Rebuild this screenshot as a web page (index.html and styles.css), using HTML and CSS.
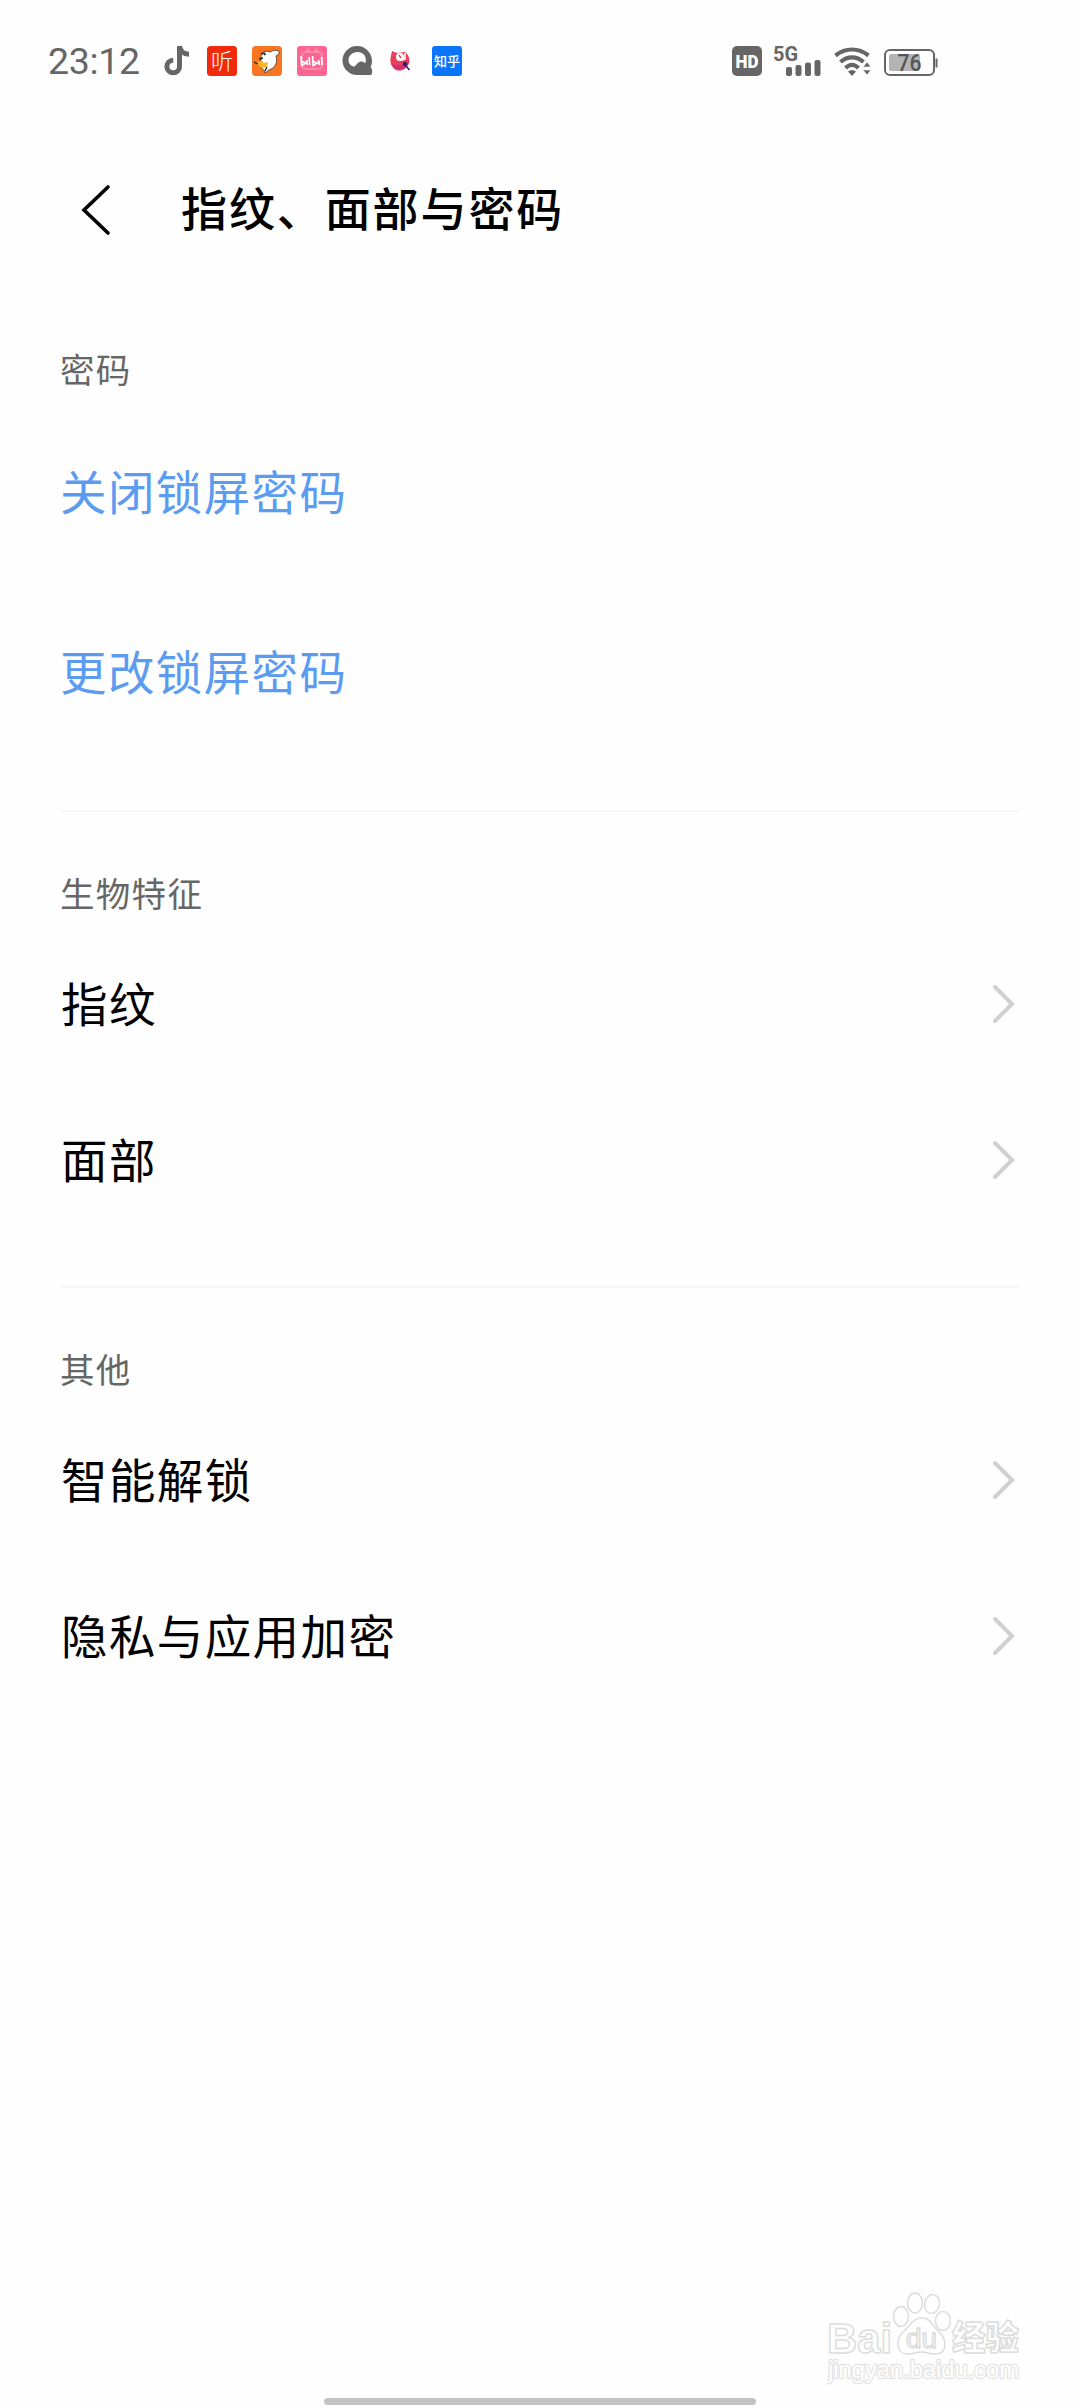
FILE: index.html
```html
<!DOCTYPE html>
<html lang="zh-CN">
<head>
    <meta charset="UTF-8">
    <meta name="viewport" content="width=device-width, initial-scale=1.0">
    <title>指纹、面部与密码</title>
    <link rel="stylesheet" href="styles.css">
</head>
<body>
    <div class="screen">
        <div class="status-bar">
            <div class="clock">23:12</div>
            <div class="app-icons">
                <svg width="30" height="30" viewBox="0 0 30 30">
                    <path d="M17.500 0v20.500a6.300 6.300 0 1 1-6.300-6.300M17.500 0c.6 5 4 8 9.500 8.300" fill="none" stroke="#666" stroke-width="5"/>
                </svg>
                <svg width="30" height="30" viewBox="0 0 30 30">
                    <rect width="30" height="30" rx="3.500" fill="#f22a0c"/>
                    <text class="ting" x="4" y="22.500" textLength="22" lengthAdjust="spacingAndGlyphs">听</text>
                </svg>
                <svg width="30" height="30" viewBox="0 0 30 30">
                    <rect width="30" height="30" rx="4" fill="#fa7521"/>
                    <path d="M9 11C9 6 13 4 18 6c3-2 6-2 9-1 1 2-1 4-3 5 2 7-1 12-7 14l-4 3c0-3-3-4-4-6z" fill="#fff" stroke="#433" stroke-width=".8"/>
                    <path d="M5 16l5-1 2 2 4-1-1 5-5 1-4-3z" fill="#fbb52c"/>
                    <path d="M2 16l4 2M9 8l4-1M12 9l2-1M7 13l4-1M13 25l2-4" fill="none" stroke="#222" stroke-width="1.300"/>
                </svg>
                <svg width="30" height="30" viewBox="0 0 30 30">
                    <rect width="30" height="30" rx="3" fill="#fb6592"/>
                    <path d="M10 3l3 3M20 3l-3 3" stroke="#fd94b3" stroke-width="2"/>
                    <rect x="5" y="6" width="20" height="17" rx="4" fill="none" stroke="#fd87aa" stroke-width="2"/>
                    <path d="M4 10l.7 9.500 4-2.500-3.700-1.500M9.500 14l1 5M12 11l.8 8M15.500 10l.7 9.500 4-2.500-3.700-1.500M21.500 14l1 5M24.500 11l.8 8" fill="none" stroke="#fff" stroke-width="1.700"/>
                </svg>
                <svg width="30" height="30" viewBox="0 0 30 30">
                    <path fill-rule="evenodd" d="M15 0a15 15 0 0 1 15 15c0 2.500-.5 4-1.500 6 2 2 2.500 6 .5 8H15A14.500 14.500 0 0 1 15 0zM15.500 6C10 6 6.500 10 6.500 14c0 4 3 6.500 6 6.500 3-3 4-5 7.500-5l3.500 1.500C25 11 22 6 15.500 6z" fill="#666"/>
                </svg>
                <svg width="30" height="30" viewBox="0 0 30 30">
                    <path d="M5 5l5 2 8-1c5 4 6 10 2 15-5 5-12 5-15-1-3-5-1-10 0-15z" fill="#e8405a"/>
                    <path d="M4 17c3 4 12 3 18-2-1 9-14 13-18 2z" fill="#d02f78"/>
                    <circle cx="13" cy="11" r="4" fill="#fff"/>
                    <path d="M18 7v6l-3 1" fill="none" stroke="#fff" stroke-width="1.500"/>
                    <path d="M12 9l2 3" stroke="#e8405a" stroke-width="1.500"/>
                    <circle cx="18" cy="18" r="2.200" fill="#33206b"/>
                    <path d="M19 20l3.500 4" stroke="#33206b" stroke-width="1.500"/>
                </svg>
                <svg width="30" height="30" viewBox="0 0 30 30">
                    <rect width="30" height="30" rx="3" fill="#0a74fa"/>
                    <text class="zhihu" x="2" y="19.500" textLength="26">知乎</text>
                </svg>
            </div>
            <div class="system-icons">
                <svg width="30" height="30" viewBox="0 0 30 30">
                    <rect width="30" height="30" rx="5" fill="#666"/>
                    <text class="hd" x="3.500" y="21.500" textLength="23" lengthAdjust="spacingAndGlyphs">HD</text>
                </svg>
                <svg width="48" height="30" viewBox="0 0 48 30">
                    <text class="network" x="-1" y="14.500" textLength="25" lengthAdjust="spacingAndGlyphs">5G</text>
                    <rect x="12" y="21" width="6" height="9" rx="2" fill="#666"/>
                    <rect x="21.500" y="19" width="6" height="11" rx="2" fill="#666"/>
                    <rect x="31" y="16.500" width="6" height="13.500" rx="2" fill="#666"/>
                    <rect x="40.500" y="14" width="6" height="16" rx="2" fill="#666"/>
                </svg>
                <svg width="38" height="30" viewBox="0 0 38 30">
                    <path d="M1.500 9.500c10-8 23-8 33 0M6.500 16c7-6.300 16-6.300 23 0M11.500 22c4.500-4.300 8.500-4.300 13 0" fill="none" stroke="#666" stroke-width="4.200"/>
                    <path d="M14 25.500c2.500-2 5.500-2 8 0l-4 4.500z" fill="#666"/>
                    <path d="M29 21l4-5 4 5zM29 24l4 5 4-5z" fill="#666" stroke="#fefefe" stroke-width=".6"/>
                </svg>
                <svg width="54" height="30" viewBox="0 0 54 30">
                    <rect x="1" y="4" width="49" height="25" rx="5" fill="none" stroke="#666" stroke-width="2"/>
                    <rect x="5" y="8" width="31" height="17" rx="2" fill="#b4b4b4"/>
                    <path d="M52.500 12.500v9" stroke="#666" stroke-width="2"/>
                    <text class="battery-level" x="13.500" y="24.500" textLength="24" lengthAdjust="spacingAndGlyphs">76</text>
                </svg>
            </div>
        </div>

        <div class="header">
            <svg class="back" width="32" height="52" viewBox="0 0 32 52">
                <path d="M28 3L4 26l24 23" fill="none" stroke="#000" stroke-width="3.600" stroke-linecap="round"/>
            </svg>
            <h1>指纹、面部与密码</h1>
        </div>

        <div class="section password">
            <div class="label">密码</div>
            <div class="row link">关闭锁屏密码</div>
            <div class="row link">更改锁屏密码</div>
        </div>

        <div class="section">
            <div class="label">生物特征</div>
            <div class="row">
                <span>指纹</span>
                <svg class="arrow" width="24" height="40" viewBox="0 0 24 40"><path d="M3 3l17 17L3 37"/></svg>
            </div>
            <div class="row">
                <span>面部</span>
                <svg class="arrow" width="24" height="40" viewBox="0 0 24 40"><path d="M3 3l17 17L3 37"/></svg>
            </div>
        </div>

        <div class="section others">
            <div class="label">其他</div>
            <div class="row">
                <span>智能解锁</span>
                <svg class="arrow" width="24" height="40" viewBox="0 0 24 40"><path d="M3 3l17 17L3 37"/></svg>
            </div>
            <div class="row">
                <span>隐私与应用加密</span>
                <svg class="arrow" width="24" height="40" viewBox="0 0 24 40"><path d="M3 3l17 17L3 37"/></svg>
            </div>
        </div>

        <div class="home-bar"></div>

        <svg class="watermark" width="200" height="100" viewBox="0 0 200 100">
            <text class="brand" x="0" y="65" textLength="65" lengthAdjust="spacingAndGlyphs">Bai</text>
            <ellipse cx="74" cy="28.500" rx="7.500" ry="10"/>
            <ellipse cx="88" cy="15" rx="7.500" ry="10"/>
            <ellipse cx="105" cy="16" rx="7.500" ry="9.500" transform="rotate(12 105 16)"/>
            <ellipse cx="116" cy="33" rx="7.500" ry="9.500"/>
            <path d="M95 30c9 0 10 8 17 14 8 7 9 22-4 22-6 0-8-2-13-2s-9 2-14 2c-12 0-13-14-5-22 7-6 10-14 19-14z"/>
            <text class="du" x="79" y="60" textLength="31" lengthAdjust="spacingAndGlyphs">du</text>
            <text class="jingyan" x="125" y="62" textLength="67" lengthAdjust="spacingAndGlyphs">经验</text>
            <text class="site" x="1" y="90" textLength="191" lengthAdjust="spacingAndGlyphs">jingyan.baidu.com</text>
        </svg>
    </div>
</body>
</html>
```

FILE: styles.css
```css
body {
    margin: 0;
    background: #fefefe;
    font-family: Roboto, "Noto Sans CJK SC", sans-serif;
    color: #000;
}

.screen {
    position: relative;
    display: flex;
    flex-direction: column;
    width: 1080px;
    height: 2408px;
    overflow: hidden;
}

/* Status bar */
.status-bar {
    display: flex;
    align-items: center;
    box-sizing: border-box;
    height: 122px;
    padding: 0 142px 0 48px;
}

.status-bar svg {
    display: block;
    overflow: visible;
}

.clock {
    width: 114px;
    font-size: 37.5px;
    letter-spacing: -0.3px;
    color: #666;
}

.app-icons {
    display: flex;
    gap: 15px;
}

.system-icons {
    display: flex;
    gap: 12px;
    margin-left: auto;
}

.ting {
    font: 300 22px/1 "Noto Sans CJK SC", sans-serif;
    fill: #fff;
}

.zhihu {
    font: 500 13px/1 "Noto Sans CJK SC", sans-serif;
    fill: #fff;
}

.hd {
    font: 900 18px Roboto, sans-serif;
    fill: #fff;
}

.network {
    font: 700 20px Roboto, sans-serif;
    fill: #666;
}

.battery-level {
    font: 500 23px Roboto, sans-serif;
    fill: #555;
}

/* Title */
.header {
    display: flex;
    align-items: center;
    height: 176px;
    padding-left: 80px;
}

.header h1 {
    margin: 0 0 0 69px;
    padding-bottom: 9px;
    font-size: 46px;
    font-weight: 500;
    letter-spacing: 1.9px;
    font-family: "Noto Sans CJK SC", sans-serif;
}

/* Settings list */
.section {
    margin: 0 60px;
    padding: 66px 0 47px;
    border-bottom: 2px solid #f7f7f7;
}

.label {
    height: 34px;
    margin-bottom: 15px;
    line-height: 34px;
    font-size: 34.5px;
    letter-spacing: 1.3px;
    color: #666;
}

.row {
    display: flex;
    justify-content: space-between;
    align-items: center;
    height: 156px;
    font-size: 46.5px;
    line-height: 56px;
    letter-spacing: 1.4px;
}

.row span {
    padding: 2px 0 0 1px;
}

.password {
    padding-top: 56px;
}

.password .row {
    box-sizing: border-box;
    height: 180px;
    padding-top: 1px;
}

.others {
    border-bottom: none;
}

.link {
    color: #5b9bf0;
}

.arrow {
    padding: 0 4px 2px 0;
}

.arrow path {
    fill: none;
    stroke: #d0d0d0;
    stroke-width: 4;
    stroke-linecap: round;
}

.home-bar {
    width: 432px;
    height: 7px;
    margin: auto auto 3px;
    border-radius: 4px;
    background: #c3c3c3;
}

/* Watermark */
.watermark {
    position: absolute;
    left: 827px;
    top: 2288px;
    fill: #fefefe;
    stroke: #dcdcdc;
    stroke-width: 1.5;
    stroke-linejoin: round;
}

.brand {
    font: 700 43px "Liberation Sans", sans-serif;
}

.du {
    font: 400 28px "Liberation Sans", sans-serif;
}

.jingyan {
    font: 900 34px "Noto Sans CJK SC", sans-serif;
}

.site {
    font: 400 23px "Liberation Sans", sans-serif;
    stroke: #e4e4e4;
    stroke-width: 2.5;
    paint-order: stroke;
}
```
